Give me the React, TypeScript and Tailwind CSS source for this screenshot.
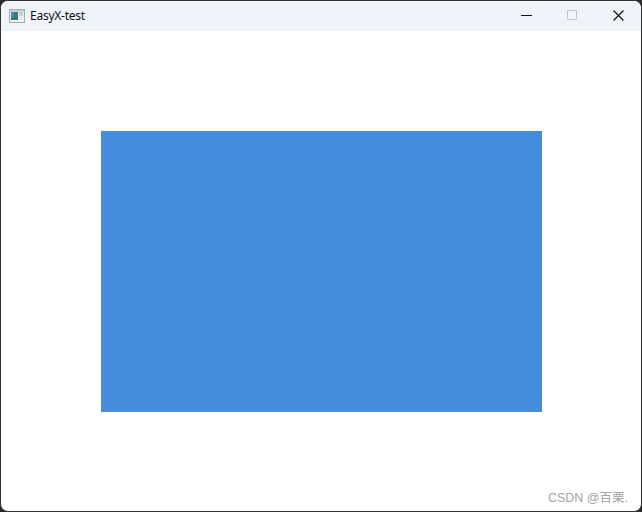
import React from "react";

const AppIcon = () => (
  <svg width="16" height="14" viewBox="0 0 16 14" className="shrink-0">
    <rect x="0.5" y="0.5" width="15" height="13" fill="#eef1f3" stroke="#a4abb2" />
    <rect x="1" y="1" width="14" height="2" fill="#c9d0d6" />
    <rect x="2" y="3" width="7" height="8" fill="#3b7a80" />
    <rect x="2" y="3" width="3" height="5" fill="#4a86b8" />
    <rect x="10" y="3" width="4" height="4" fill="#c3d3d6" />
    <rect x="10" y="8" width="4" height="3" fill="#e4e8e6" />
  </svg>
);

const App = () => {
  return (
    <div className="h-[512px] w-[642px] bg-[#2b2b2b]">
      <div className="relative flex h-full w-full flex-col overflow-hidden rounded-[8px] border border-[#333333] bg-white">
        {/* Title bar */}
        <div className="flex h-[30px] shrink-0 items-center bg-[#eff3fa]">
          <div className="ml-[8px] flex items-center gap-[5px]">
            <AppIcon />
            <span className="text-[12px] leading-[16px] text-[#111111]" style={{ fontFamily: '"Noto Sans", sans-serif', letterSpacing: "-0.25px" }}>
              EasyX-test
            </span>
          </div>
          <div className="ml-auto flex items-center pb-[2px]">
            <button className="flex h-[28px] w-[46px] items-center justify-center">
              <span className="block h-px w-[11px] bg-[#111111]" />
            </button>
            <button className="flex h-[28px] w-[46px] items-center justify-center">
              <span className="block h-[10px] w-[10px] rounded-[1px] border border-[#c4c6ca]" />
            </button>
            <button className="flex h-[28px] w-[46px] items-center justify-center">
              <svg width="11" height="11" viewBox="0 0 11 11">
                <path d="M0.5 0.5 L10.5 10.5 M10.5 0.5 L0.5 10.5" stroke="#111111" strokeWidth="1.2" fill="none" />
              </svg>
            </button>
          </div>
        </div>

        {/* Client area */}
        <div className="flex-1 pl-[100px] pt-[100px]">
          <div className="h-[281px] w-[441px] bg-[#468ddd]" />
        </div>

        {/* Watermark */}
        <span
          className="absolute bottom-[4px] right-[13px] text-[12.5px] leading-[18px] text-[#a3a3a3]"
          style={{ fontFamily: '"Liberation Sans", "Noto Sans CJK SC", sans-serif' }}
        >
          CSDN @百栗.
        </span>
      </div>
    </div>
  );
};

export default App;
